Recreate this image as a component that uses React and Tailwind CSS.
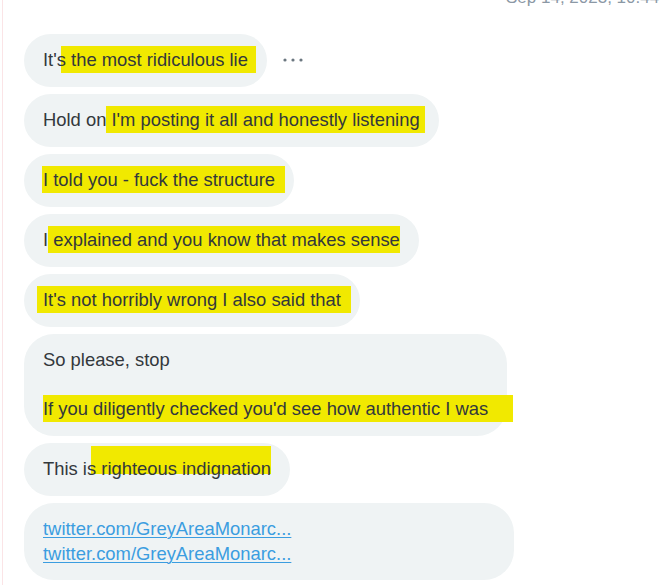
const hl = 'bg-[#f1e900]'

function Bubble({ children, className = '' }) {
  return (
    <div className={`self-start rounded-[28px] bg-[#eff3f4] px-[19px] py-[14px] leading-[24.5px] ${className}`}>
      {children}
    </div>
  )
}

function Dots() {
  return (
    <svg width="22" height="6" viewBox="0 0 22 6" className="text-[#6b7780]">
      <circle cx="3" cy="3" r="1.6" fill="currentColor" />
      <circle cx="11" cy="3" r="1.6" fill="currentColor" />
      <circle cx="19" cy="3" r="1.6" fill="currentColor" />
    </svg>
  )
}

export default function App() {
  return (
    <div className="min-h-[585px] bg-white font-['Liberation_Sans',Arial,sans-serif] text-[18.4px] text-[#33383c]">
      <div className="ml-[2px] min-h-[585px] border-l border-[#fbe4e6] overflow-hidden">
        {/* timestamp, cut off at the top */}
        <div className="h-[34px] overflow-hidden whitespace-nowrap pl-[503px]">
          <div className="-mt-[15px] text-[17px] text-[#8b98a5]">Sep 14, 2023, 10:44 PM</div>
        </div>

        <div className="flex flex-col gap-[7.5px] pl-[21px]">
          <div className="flex items-center gap-[15px]">
            <Bubble>
              It'<span className={`py-[3px] pr-[8px] -mr-[8px] bg-[linear-gradient(to_right,transparent_4px,#f1e900_4px)]`}>s the most ridiculous lie</span>
            </Bubble>
            <Dots />
          </div>

          <Bubble>
            Hold on<span className={`${hl} py-[3px] pr-[5px] -mr-[5px]`}> I'm posting it all and honestly listening</span>
          </Bubble>

          <Bubble>
            <span className={`${hl} py-[3px] pl-[1px] -ml-[1px] pr-[10px] -mr-[10px]`}>I told you - fuck the structure</span>
          </Bubble>

          <Bubble>
            I<span className={`${hl} py-[3px]`}> explained and you know that makes sense</span>
          </Bubble>

          <Bubble>
            <span className={`${hl} py-[3px] pl-[6px] -ml-[6px] pr-[10px] -mr-[10px]`}>It's not horribly wrong I also said that</span>
          </Bubble>

          <Bubble className="rounded-[30px]">
            <div>So please, stop</div>
            <div>&nbsp;</div>
            <div>
              <span className={`${hl} py-[3px] pr-[25px] -mr-[25px]`}>If you diligently checked you'd see how authentic I was</span>
            </div>
          </Bubble>

          <Bubble>
            This i<span className="pt-[12px] bg-no-repeat bg-top bg-[length:100%_28px] bg-[linear-gradient(to_right,transparent_4px,#f1e900_4px)]">s righteous indignation</span>
          </Bubble>

          <Bubble className="w-[490px] rounded-[30px]">
            <a className="block text-[#3b9de0] underline decoration-1 underline-offset-2">twitter.com/GreyAreaMonarc...</a>
            <a className="block text-[#3b9de0] underline decoration-1 underline-offset-2">twitter.com/GreyAreaMonarc...</a>
          </Bubble>
        </div>
      </div>
    </div>
  )
}
